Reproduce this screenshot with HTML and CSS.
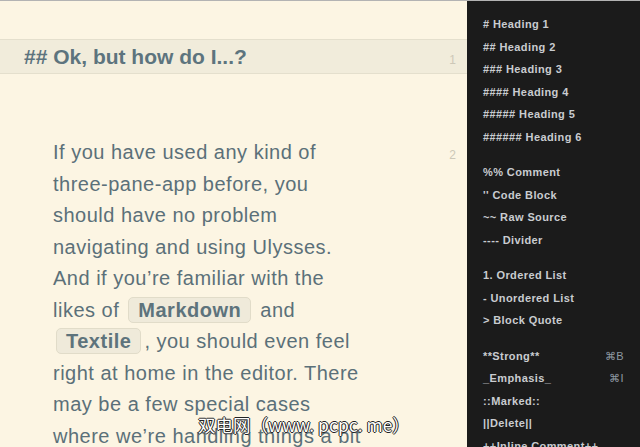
FILE: index.html
```html
<!DOCTYPE html>
<html lang="en">
<head>
<meta charset="utf-8">
<title>Ulysses editor</title>
<link rel="stylesheet" href="styles.css">
</head>
<body>
<div class="window">
  <main class="editor">
    <div class="block heading-block">
      <h2 class="heading">## Ok, but how do I...?</h2>
      <span class="ln">1</span>
    </div>
    <div class="block para-block">
      <p class="para">If you have used any kind of three-pane-app before, you should have no problem navigating and using Ulysses. And if you’re familiar with the likes of <span class="chip chip-gap">Markdown</span> and <span class="chip">Textile</span>, you should even feel right at home in the editor. There may be a few special cases where we’re handling things a bit differently, but you will get used to them quickly.</p>
      <span class="ln">2</span>
    </div>
  </main>
  <aside class="panel">
    <ul class="group">
      <li># Heading 1</li>
      <li>## Heading 2</li>
      <li>### Heading 3</li>
      <li>#### Heading 4</li>
      <li>##### Heading 5</li>
      <li>###### Heading 6</li>
    </ul>
    <ul class="group">
      <li>%% Comment</li>
      <li>'' Code Block</li>
      <li>~~ Raw Source</li>
      <li>---- Divider</li>
    </ul>
    <ul class="group">
      <li>1. Ordered List</li>
      <li>- Unordered List</li>
      <li>&gt; Block Quote</li>
    </ul>
    <ul class="group">
      <li><span>**Strong**</span><span class="key">⌘B</span></li>
      <li><span>_Emphasis_</span><span class="key">⌘I</span></li>
      <li>::Marked::</li>
      <li>||Delete||</li>
      <li>++Inline Comment++</li>
    </ul>
  </aside>
  <div class="watermark">双电网（www. pcpc. me）</div>
</div>
</body>
</html>
```

FILE: styles.css
```css
html, body {
  margin: 0;
  padding: 0;
  height: 447px;
  overflow: hidden;
}

body {
  font-family: "Liberation Sans", Arial, sans-serif;
  background: #fcf5e3;
}

.window {
  position: relative;
  display: flex;
  height: 446px;
  border-top: 1px solid #b3b3b3;
  overflow: hidden;
}

.editor {
  width: 467px;
  flex: none;
  background: #fcf5e3;
  padding-top: 38px;
  box-sizing: border-box;
}

.block {
  display: flex;
  align-items: baseline;
  justify-content: space-between;
  padding-right: 11px;
}

.heading-block {
  background: #f1ecdb;
  border-top: 1px solid #e4dfcd;
  border-bottom: 1px solid #e4dfcd;
  padding-left: 24px;
  height: 33px;
  box-sizing: content-box;
}

.heading {
  margin: 0;
  font-size: 21px;
  line-height: 33px;
  font-weight: bold;
  color: #5d747e;
}

.ln {
  font-size: 12px;
  color: #cdc8b8;
}

.para-block {
  padding-left: 53px;
  margin-top: 63px;
}

.para {
  margin: 0;
  width: 312px;
  font-size: 20px;
  line-height: 31.5px;
  letter-spacing: 0.5px;
  color: #5b7079;
}

.chip {
  display: inline-block;
  font-weight: bold;
  line-height: 22px;
  padding: 1px 9px;
  margin: 0 3px;
  background: #efeada;
  border: 1px solid #e1dcc9;
  border-radius: 5px;
  color: #5d737c;
}

.panel {
  flex: 1;
  background: #1b1b1b;
  padding: 12px 16px 0 16px;
}

.group {
  list-style: none;
  margin: 0 0 12.6px 0;
  padding: 0;
}

.group li {
  display: flex;
  justify-content: space-between;
  font-size: 11px;
  font-weight: bold;
  letter-spacing: 0.4px;
  line-height: 22.6px;
  color: #c9ccd0;
  white-space: nowrap;
}

.key {
  color: #8e99a2;
  font-weight: normal;
}

.watermark {
  position: absolute;
  left: 198px;
  top: 411px;
  font-family: "Noto Sans CJK SC", "DejaVu Sans", sans-serif;
  font-size: 17.5px;
  color: #ffffff;
  white-space: nowrap;
  text-shadow: 1px 0 0 #222, -1px 0 0 #222, 0 1px 0 #222, 0 -1px 0 #222;
}
```
